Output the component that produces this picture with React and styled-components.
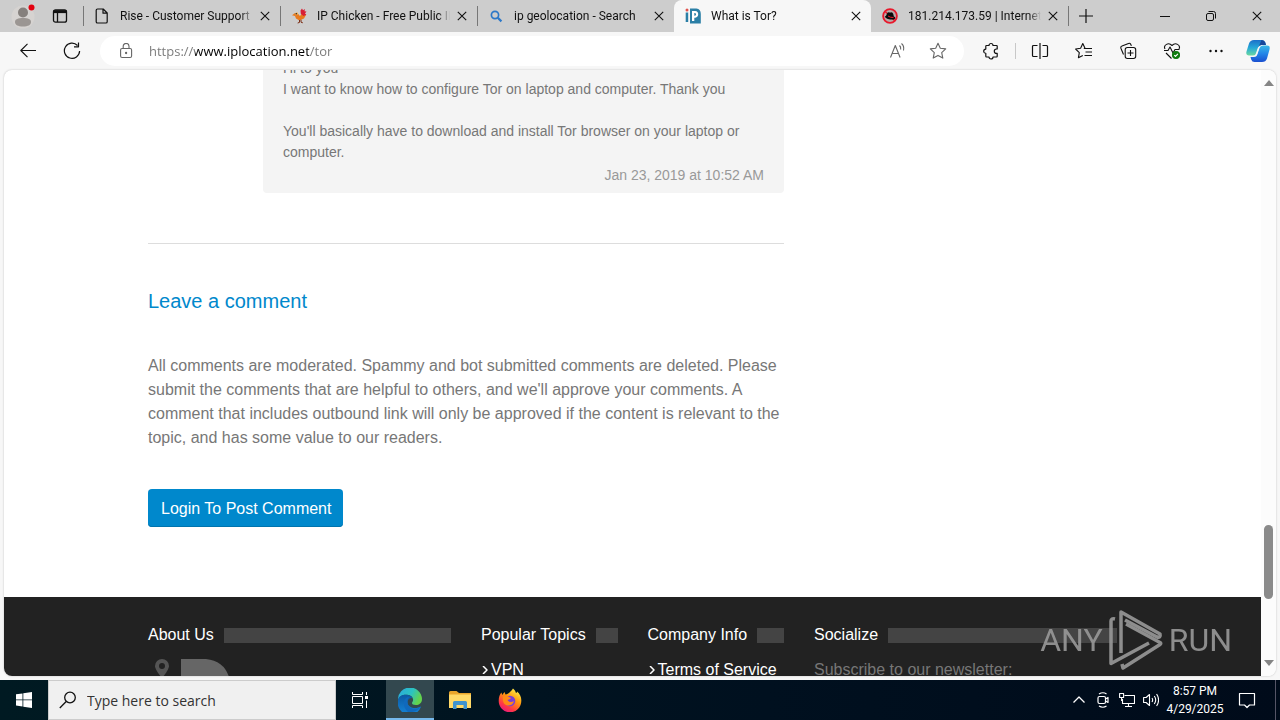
import React,{useState} from "react";
import styled,{createGlobalStyle} from 'styled-components'

const tabs = [
  { title: "Rise - Customer Support", icon: "page" },
  { title: "IP Chicken - Free Public IP", icon: "chicken" },
  { title: "ip geolocation - Search", icon: "search" },
  { title: "What is Tor?", icon: "ip" },
  { title: "181.214.173.59 | Internet Info", icon: "hat" },
]

const TabIcon = ({name}) => {
  if(name === "page"){
    return (
      <Svg $size={16} viewBox="0 0 16 16" strokeWidth="1.2">
        <path d="M3.5 1h5.7l4 4v8.7a1.3 1.3 0 0 1-1.3 1.3H3.5a1.3 1.3 0 0 1-1.3-1.3V2.3A1.3 1.3 0 0 1 3.5 1zM9 1v4.2h4.2" />
      </Svg>
    )
  }else if(name === "chicken"){
    return (
      <Svg $size={16} viewBox="0 0 16 16" stroke="none">
        <path d="M1 7.2 4 5l2.4.3L9 8l2.5-3.5L15 7l-2 3.6-4.5 1.8L5 10.5 4 8z" fill="#e87a1e" />
        <path d="M9.5 2.5 11 .5l1 1.7L14 1l-.5 2.3 2 .2-1.5 2 1.4 1.3-3 1.2-2.6-2.2z" fill="#d81f35" />
        <path d="M4 5.2 6.2 4l1 2.3-2.4 1.2z" fill="#f5b35b" />
        <circle cx="5.3" cy="5.8" r=".8" fill="#222" />
        <path d="M8.5 12v2.4L6.7 15M10 11.8v2.4l1.8.6" stroke="#7b2d14" fill="none" />
      </Svg>
    )
  }else if(name === "search"){
    return (
      <Svg $size={16} viewBox="0 0 16 16" stroke="#2c78c8" strokeWidth="1.7">
        <circle cx="7" cy="7" r="3.6" /><path d="m9.8 9.8 3.6 3.6" strokeWidth="2.2" />
      </Svg>
    )
  }else if(name === "ip"){
    return (
      <Svg $size={16} viewBox="0 0 16 16" stroke="none">
        <circle cx="2" cy="2" r="1.5" fill="#e0524d" />
        <path d="M.7 4.6h2.5V14H.7zM5 .5h6.5Q15.8 1 15.8 6v9.6H5z" fill="#2b7fa6" />
        <path d="M7 3h3.2q3 .4 3 3.3t-3 3.4H9.3V13H7z" fill="#fff" />
        <path d="M9.3 5h.7q1 .2 1 1.3T10 7.7h-.7z" fill="#2b7fa6" />
      </Svg>
    )
  }
  return (
    <Svg $size={16} viewBox="0 0 16 16" stroke="none">
      <circle cx="8" cy="8" r="6.9" fill="#b9a9a9" stroke="#e8192c" strokeWidth="1.8" />
      <path d="m3.2 3.5 9.8 9.5" stroke="#e8192c" strokeWidth="1.5" />
      <path d="M2.8 8.5C5 8 4.6 4.3 6.5 4.2c1.2 0 1.7.5 2.7.2 1.7-.5 2.4 2.4 2.6 4.1 1 .4 1.7 1 1.3 1.9-.6 1.3-3.8 1.4-6.2.8C4.5 10.6 3 9.6 2.8 8.5z" fill="#0a0a0a" />
      <path d="M6 8q2.500 1.800 5.500 1.500" stroke="#e8192c" />
    </Svg>
  )
}

const Close = ({size = 10}) => (
  <Svg $size={size} viewBox="0 0 10 10" strokeWidth="1.1"><path d="m.8.8 8.4 8.4M9.2.8.8 9.2" /></Svg>
)

const TabStrip = () => {
  const [active,setActive] = useState(3);
  return (
    <Strip>
      <Profile aria-label="Profile">
        <Svg $size={26} viewBox="0 0 26 26" stroke="none">
          <circle cx="12" cy="14" r="11.5" fill="#d6d3d1" />
          <circle cx="12" cy="9.5" r="5" fill="#85807d" />
          <path d="M4 19c0-3 3-4 8-4s8 1 8 4c0 3-3 4.5-8 4.5S4 22 4 19z" fill="#9b9693" />
          <circle cx="20.500" cy="4.500" r="3" fill="#e3000f" />
        </Svg>
      </Profile>
      <Workspaces aria-label="Tab actions menu">
        <Svg $size={16} viewBox="0 0 16 16" strokeWidth="1.3">
          <rect x="1.5" y="1.8" width="13" height="12.4" rx="2" />
          <path d="M1.5 3.6h13" strokeWidth="3" /><path d="M5.5 4v10" />
        </Svg>
      </Workspaces>
      <Tabs role="tablist">
        {tabs.map((tab,i) => (
          <Tab key={tab.title} $active={i === active} $bare={i === active || i === active + 1}>
            <TabLabel role="tab" aria-selected={i === active} onClick={() => setActive(i)}>
              <TabIcon name={tab.icon} />
              <TabTitle>{tab.title}</TabTitle>
            </TabLabel>
            <TabClose aria-label={`Close ${tab.title}`}><Close /></TabClose>
          </Tab>
        ))}
        <NewTab aria-label="New tab">
          <Svg $size={14} viewBox="0 0 14 14" strokeWidth="1.2"><path d="M7 0v14M0 7h14" /></Svg>
        </NewTab>
      </Tabs>
      <WindowButton aria-label="Minimize">
        <Svg $size={10} viewBox="0 0 10 10"><path d="M0 5.5h10" /></Svg>
      </WindowButton>
      <WindowButton aria-label="Restore">
        <Svg $size={10} viewBox="0 0 10 10">
          <rect x=".5" y="2.5" width="7" height="7" rx="1.5" />
          <path d="M2.5.5h5a2 2 0 0 1 2 2v5" />
        </Svg>
      </WindowButton>
      <WindowButton aria-label="Close window"><Close /></WindowButton>
    </Strip>
  )
}

const AddressBar = () => {
  const [url,setUrl] = useState("https://www.iplocation.net/tor");
  return (
    <Toolbar>
      <ToolButton aria-label="Back">
        <Svg $size={16} viewBox="0 0 16 16" strokeWidth="1.1"><path d="M16 7.5H.8M7.5.8.8 7.5l6.7 6.7" /></Svg>
      </ToolButton>
      <ToolButton aria-label="Refresh">
        <Svg $size={18} viewBox="0 0 18 18" strokeWidth="1.2"><path d="M14.5 3.5A7.6 7.6 0 1 0 16.6 9M15.5.5v4.3h-4.5" /></Svg>
      </ToolButton>
      <Address>
        <Svg $size={16} viewBox="0 0 16 16" stroke="#666" strokeWidth="1.1">
          <rect x="2.6" y="5.5" width="11" height="9" rx="1.5" />
          <path d="M5.2 5.5V3.3a2.9 2.9 0 0 1 5.8 0v2.2" /><circle cx="8.1" cy="10" r=".6" fill="#666" />
        </Svg>
        <Url aria-label="Address and search bar" value={url} onChange={(event) => setUrl(event.target.value)} />
        <AddressButton aria-label="Read aloud">
          <Svg $size={18} viewBox="0 0 18 18" stroke="#666" strokeWidth="1.1">
            <path d="M1.5 15.5 6.3 3.5l4.8 12M3.3 11.5h6M10.5 3.5q1.5 1.3 1.2 4M12.5 1.500q3 2.500 2 7" />
          </Svg>
        </AddressButton>
        <AddressButton aria-label="Add to favorites">
          <Svg $size={18} viewBox="0 0 18 18" stroke="#666" strokeWidth="1.1">
            <path d="m9 1.3 2.3 5 5.4.6-4 3.7 1.1 5.5L9 13.4l-4.8 2.7 1.1-5.500-4-3.700 5.400-.6z" />
          </Svg>
        </AddressButton>
      </Address>
      <ToolButton aria-label="Extensions">
        <Svg $size={18} viewBox="0 0 18 18" strokeWidth="1.2">
          <path d="M4.500 3.500H7a2 2 0 0 1 4 0h3.500q.7 0 .7.700v2.800h-.7a2.200 2.200 0 0 0 0 4.400h.7v2.900q0 .7-.7.700H11a2 2 0 0 1-4 0H4.500q-.7 0-.7-.7v-3a2.100 2.100 0 0 1 0-4.200V4.200q0-.7.700-.7z" />
        </Svg>
      </ToolButton>
      <Divider />
      <ToolButton aria-label="Split screen">
        <Svg $size={18} viewBox="0 0 18 18" strokeWidth="1.2">
          <path d="M9 1v16M6.5 3.5h-4a1 1 0 0 0-1 1v9a1 1 0 0 0 1 1h4M11.5 3.5h4a1 1 0 0 1 1 1v9a1 1 0 0 1-1 1h-4" />
        </Svg>
      </ToolButton>
      <ToolButton aria-label="Favorites">
        <Svg $size={18} viewBox="0 0 18 18" strokeWidth="1.1">
          <path d="M10 6.2 7.8 1.5 5.6 6.3l-5 .7 3.7 3.6-.9 5.2 4.4-2.4M8.8 6.5H17M10.5 10H17M9.5 13.5H17" />
        </Svg>
      </ToolButton>
      <ToolButton aria-label="Collections">
        <Svg $size={18} viewBox="0 0 18 18" strokeWidth="1.1">
          <path d="M4.500 12.500 2 6.500Q1.300 4.500 3 4l6.500-2.600q1.600-.5 2.200.8l.7 1.700" />
          <rect x="6.2" y="5.500" width="10.5" height="11" rx="2.2" /><path d="M11.5 8v6M8.5 11h6" />
        </Svg>
      </ToolButton>
      <ToolButton aria-label="Browser essentials">
        <Svg $size={18} viewBox="0 0 18 18" strokeWidth="1.1">
          <path d="M2 7C0 3 5.500-.2 9 3.500 12.500-.2 18 3 16 7M1 8.500h4l2-3.500 3 6 2-3.500h4.500M3 11l5.500 5.500" />
          <circle cx="13" cy="13" r="3.500" fill="#107c10" stroke="#107c10" />
          <path d="m11.200 13.200 1.300 1.200 2.400-2.600" stroke="#fff" />
        </Svg>
      </ToolButton>
      <ToolButton aria-label="Settings and more">
        <Svg $size={14} viewBox="0 0 14 14" stroke="none">
          <circle cx="1.5" cy="7" r="1.2" fill="#111" /><circle cx="7" cy="7" r="1.2" fill="#111" /><circle cx="12.5" cy="7" r="1.2" fill="#111" />
        </Svg>
      </ToolButton>
      <CopilotButton aria-label="Copilot">
        <Svg $size={24} viewBox="0 0 24 24" stroke="none">
          <defs>
            <linearGradient id="cop1" x1="0" y1="0" x2="0" y2="1"><stop offset="0" stopColor="#1b6fc9" /><stop offset=".5" stopColor="#25a8d8" /><stop offset="1" stopColor="#6bd9a0" /></linearGradient>
            <linearGradient id="cop2" x1="0" y1="0" x2="0" y2="1"><stop offset="0" stopColor="#39b9e8" /><stop offset=".5" stopColor="#2385e8" /><stop offset="1" stopColor="#1a4fd0" /></linearGradient>
          </defs>
          <path d="M8 1h8q2.500 0 3.300 2.500L20 6h-4.500q-2.500 0-3.300 2.500L10.500 14q-.8 2.500-3.500 2.500H3q-3.500 0-2.500-4L3 4.500Q4.200 1 8 1z" fill="url(#cop1)" />
          <path d="M16 23H8.500q-2.500 0-3.300-2.500L4.500 18H8q2.500 0 3.300-2.500L13.500 9q.8-2.500 3.500-2.500h4q3.500 0 2.500 4L21 19.500Q19.800 23 16 23z" fill="url(#cop2)" />
          <path d="M15.500 1q3 0 3.800 2.500L20 6h-4.500q-2 0-2.700 1.500z" fill="#17479b" />
          <path d="m13.500 8-2.800 8.500h-1.500L12 8.500z" fill="#f7f7f7" />
        </Svg>
      </CopilotButton>
    </Toolbar>
  )
}

const FooterTitle = ({children}) => <TitleRow><h2>{children}</h2><Bar /></TitleRow>

const FooterLink = ({children}) => (
  <Link href="#">
    <Svg $size={8} viewBox="0 0 8 8" stroke="#fff" strokeWidth="1.5"><path d="m2 0 4 4-4 4" /></Svg>
    {children}
  </Link>
)

const WebPage = () => (
  <Page>
    <Scroller>
      <Article>
        <Thread>
          <Comment>
            <p>Hi to you<br />I want to know how to configure Tor on laptop and computer. Thank you</p>
            <p>You'll basically have to download and install Tor browser on your laptop or computer.</p>
            <CommentDate>Jan 23, 2019 at 10:52 AM</CommentDate>
          </Comment>
          <Rule />
          <Heading>Leave a comment</Heading>
          <Notice>
            All comments are moderated. Spammy and bot submitted comments are deleted. Please submit the comments that are helpful to others, and we'll approve your comments. A comment that includes outbound link will only be approved if the content is relevant to the topic, and has some value to our readers.
          </Notice>
          <LoginButton>Login To Post Comment</LoginButton>
        </Thread>
      </Article>
      <Footer>
        <Columns>
          <Column $span={4}>
            <FooterTitle>About Us</FooterTitle>
            <Svg $size={90} viewBox="0 0 90 90" stroke="none">
              <path d="M14 1a7 7 0 0 1 7 7c0 4-7 12-7 12S7 12 7 8a7 7 0 0 1 7-7z" fill="#555" />
              <circle cx="14" cy="8" r="3" fill="#222" />
              <path d="M33 1h25q18 2 23 18v60H33z" fill="#666" />
            </Svg>
          </Column>
          <Column $span={2}>
            <FooterTitle>Popular Topics</FooterTitle>
            <FooterLink>VPN</FooterLink>
          </Column>
          <Column $span={2}>
            <FooterTitle>Company Info</FooterTitle>
            <FooterLink>Terms of Service</FooterLink>
          </Column>
          <Column $span={4}>
            <FooterTitle>Socialize</FooterTitle>
            <Newsletter>Subscribe to our newsletter:</Newsletter>
          </Column>
        </Columns>
      </Footer>
    </Scroller>
    <Scrollbar>
      <Svg $size={10} viewBox="0 0 10 10" stroke="none"><path d="M5 2 10 8H0z" fill="#858585" /></Svg>
      <Track><Thumb /></Track>
      <Svg $size={10} viewBox="0 0 10 10" stroke="none"><path d="M5 8 0 2h10z" fill="#858585" /></Svg>
    </Scrollbar>
    <Watermark>
      <span>ANY</span>
      <Svg $size={64} $width={56} viewBox="2 0 56 64" stroke="#999" strokeWidth="3.5">
        <path d="M9 11q-4-1-4 2v42.500L43 35" />
        <path d="M15 45V4l39 22q1 4-3 3L19 12" />
        <path d="M20 16l34 18.500q1.500 1 0 2L17 60l-1-4" />
      </Svg>
      <span>RUN</span>
    </Watermark>
  </Page>
)

const Taskbar = () => {
  const [query,setQuery] = useState("");
  return (
    <Task>
      <TaskButton aria-label="Start">
        <Svg $size={16} viewBox="0 0 16 16" stroke="none">
          <path d="M0 2.3 6.5 1.4v6.1H0zM7.3 1.3 16 0v7.5H7.3zM0 8.3h6.5v6.2L0 13.6zM7.3 8.3H16V16l-8.7-1.3z" fill="#fff" />
        </Svg>
      </TaskButton>
      <SearchBox>
        <Svg $size={18} viewBox="0 0 18 18" strokeWidth="1.3"><circle cx="11" cy="6.5" r="5.3" /><path d="M7.2 10.5.8 17" /></Svg>
        <SearchInput aria-label="Search" placeholder="Type here to search" value={query} onChange={(event) => setQuery(event.target.value)} />
      </SearchBox>
      <Apps>
        <TaskButton aria-label="Task view">
          <Svg $size={18} viewBox="0 0 18 18" stroke="#fff">
            <rect x="1.5" y="5.5" width="10" height="7" /><path d="M1.5 1v2.5h10V1M1.5 17v-2.5h10V17M15.5 1v3M15.5 9.5V17" /><path d="M15.5 5v3" strokeWidth="3" />
          </Svg>
        </TaskButton>
        <TaskButton aria-label="Microsoft Edge" $active>
          <Svg $size={24} viewBox="0 0 24 24" stroke="none">
            <defs>
              <linearGradient id="edge1" x1="0" y1="0" x2="1" y2=".4"><stop offset="0" stopColor="#2aa9e0" /><stop offset=".6" stopColor="#2cc3c0" /><stop offset="1" stopColor="#63d34c" /></linearGradient>
              <linearGradient id="edge2" x1="0" y1="0" x2="0" y2="1"><stop offset="0" stopColor="#0c59a4" /><stop offset="1" stopColor="#1585d8" /></linearGradient>
            </defs>
            <path d="M0 12A12 12 0 0 1 24 11c0 4-3 6-6 6s-4-1-4-2 1.5-1.3 1-4c-.6-3-3.6-4.3-7-4.3-4 0-7 2-8 5.3z" fill="url(#edge1)" />
            <path d="M0 12C1 8 4 6.7 8 6.7c3 0 5.5 1.3 6.5 3.3-3-.5-5 1.5-5 4 0 4 4 6 7.5 6 2.3 0 4-.7 5-1.3.7-.3 1 .3.7.8A12 12 0 0 1 0 12z" fill="url(#edge2)" />
            <path d="M10 24A12 12 0 0 1 6 14c.3-3 2.500-5 5-5-2.500 2.500-2 8 1 10.500 3 2 7 1.500 10-.3-2.600 3.500-6.500 5.500-12 4.800z" fill="#1069bd" />
          </Svg>
        </TaskButton>
        <TaskButton aria-label="File Explorer">
          <Svg $size={24} viewBox="0 0 24 24" stroke="none">
            <path d="M1 4.500q0-1.500 1.500-1.500h6L11 5h12v15H1z" fill="#e9a52b" />
            <path d="M1 6.500h22V20H1z" fill="#ffd968" />
            <path d="M5 21v-6.500q0-1.500 1.500-1.500h11q1.500 0 1.500 1.500V21h-3.500v-4h-7v4z" fill="#3e93d0" />
          </Svg>
        </TaskButton>
        <TaskButton aria-label="Firefox">
          <Svg $size={24} viewBox="0 0 24 24" stroke="none">
            <defs>
              <linearGradient id="fox" x1=".8" y1="0" x2=".2" y2="1"><stop offset="0" stopColor="#fff44f" /><stop offset=".4" stopColor="#ff980e" /><stop offset=".75" stopColor="#ff3647" /><stop offset="1" stopColor="#e31587" /></linearGradient>
            </defs>
            <path d="M15 .5c2 1.500 2.500 3 3 4.500 1-.2 1-1 1-1.500C22 6 23.500 9 23.300 13A11.300 11.300 0 0 1 .7 13C.7 9 1.700 6.500 3.500 4.500L4.200 7 6.500 4l1 2.500C10 6.500 12.500 4 15 .5z" fill="url(#fox)" />
            <circle cx="12" cy="13" r="5.300" fill="#7a3fd6" />
            <path d="M5 8.500c2-1.500 4-1 6 .5l2 1c-1 1.500-2.500 1.500-3.500 2 1.500 2.500 4 2.500 6.500 1-1 4-5 5.500-8 4S4.500 12 5 8.500z" fill="#ff8a16" />
          </Svg>
        </TaskButton>
      </Apps>
      <Tray>
        <TrayButton aria-label="Show hidden icons"><Svg $size={16} viewBox="0 0 16 16" stroke="#fff" strokeWidth="1.3"><path d="m2.5 10.5 5.5-5.5 5.5 5.5" /></Svg></TrayButton>
        <TrayButton aria-label="Meet now">
          <Svg $size={16} viewBox="0 0 16 16" stroke="#fff" strokeWidth="1.2"><rect x="3" y="4.5" width="7.5" height="7" rx="1.5" /><path d="m10.5 7 2.5-1.5v5L10.5 9M4 2q4-2.5 7.5 0M4 14q4 2.5 7.5 0" /></Svg>
        </TrayButton>
        <TrayButton aria-label="Network">
          <Svg $size={16} viewBox="0 0 16 16" stroke="#fff" strokeWidth="1.1"><path d="M5.5 3.5h10v8H3.5V7M9.5 11.5v3M6 14.5h7" /><path d="M.6 1.5h4v4h-4zM2.6 5.5V9" /></Svg>
        </TrayButton>
        <TrayButton aria-label="Volume">
          <Svg $size={16} viewBox="0 0 16 16" stroke="#fff" strokeWidth="1.1"><path d="M.6 5.500h2.500l3.400-3v11l-3.400-3H.6zM9 6q1.300 2 0 4M11.300 4q2.800 4 0 8M13.600 2q4 6 0 12" /></Svg>
        </TrayButton>
        <Clock><time>8:57 PM</time><time>4/29/2025</time></Clock>
        <Notifications aria-label="Notifications">
          <Svg $size={18} viewBox="0 0 18 18" stroke="#fff" strokeWidth="1.2"><path d="M1.5 2.5h15v11.5h-5L9 16.5 6.500 14h-5z" /></Svg>
        </Notifications>
      </Tray>
    </Task>
  )
}

const App = () => (
  <>
    <GlobalStyle />
    <Screen>
      <TabStrip />
      <AddressBar />
      <WebPage />
      <Taskbar />
    </Screen>
  </>
)

export default App;

const GlobalStyle = createGlobalStyle`
* { box-sizing: border-box; }
body { margin: 0; }
button, input { font: inherit; color: inherit; border: 0; padding: 0; background: none; outline: 0; }
h2, p { margin: 0; font-size: inherit; font-weight: 400; }
`

const Screen = styled.div`
display: flex;
flex-direction: column;
height: 100vh;
overflow: hidden;
background: #f7f7f7;
color: #111;
font-family: "Open Sans", "Noto Sans", sans-serif;
font-size: 12px;
`

const Svg = styled.svg`
flex: none;
display: block;
width: ${props => props.$width || props.$size}px;
height: ${props => props.$size}px;
fill: none;
stroke: ${props => props.stroke || "#111"};
stroke-linejoin: round;
`

const Strip = styled.div`
display: flex;
flex: none;
height: 32px;
background: #cdcdcd;
`

const IconButton = styled.button`
flex: none;
display: flex;
align-items: center;
justify-content: center;
`

const Profile = styled(IconButton)`
width: 36px;
margin-left: 6px;
`

const Workspaces = styled(IconButton)`
width: 36px;
margin-right: 5px;
`

const Tabs = styled.div`
display: flex;
flex: 1;
min-width: 0;
`

const Tab = styled.div`
position: relative;
display: flex;
align-items: center;
flex: 0 1 197px;
min-width: 0;
padding: 0 7px 0 11px;
border-radius: 8px 8px 0 0;
background: ${props => props.$active ? "#f7f7f7" : "transparent"};
&::before {
  content: "";
  position: absolute;
  left: 0;
  top: 6px;
  width: 1px;
  height: 20px;
  background: ${props => props.$bare ? "transparent" : "#777"};
}
`

const TabLabel = styled.button`
display: flex;
align-items: center;
gap: 10px;
flex: 1;
min-width: 0;
height: 100%;
text-align: left;
font-family: Roboto, "Open Sans", sans-serif;
`

const TabTitle = styled.span`
flex: 1;
overflow: hidden;
white-space: nowrap;
mask-image: linear-gradient(to left, transparent 4px, #000 16px);
`

const TabClose = styled(IconButton)`
width: 16px;
height: 16px;
`

const NewTab = styled(IconButton)`
position: relative;
width: 36px;
&::before {
  content: "";
  position: absolute;
  left: 0;
  top: 6px;
  width: 1px;
  height: 20px;
  background: #777;
}
`

const WindowButton = styled(IconButton)`
width: 46px;
`

const Toolbar = styled.div`
display: flex;
align-items: center;
gap: 4px;
flex: none;
height: 38px;
padding: 0 4px 0 8px;
`

const ToolButton = styled(IconButton)`
width: 40px;
height: 32px;
`

const CopilotButton = styled(ToolButton)`
width: 36px;
`

const Address = styled.div`
display: flex;
align-items: center;
flex: 1;
min-width: 0;
height: 30px;
margin: 0 3px 0 4px;
padding: 0 6px 0 18px;
border-radius: 15px;
background: #fff;
`

const Url = styled.input`
flex: 1;
min-width: 0;
height: 24px;
margin-left: 15px;
font-size: 13px;
background: linear-gradient(to right, #777 46px, #000 46px, #000 160px, #777 160px);
background-clip: text;
-webkit-text-fill-color: transparent;
`

const AddressButton = styled(IconButton)`
width: 40px;
height: 28px;
`

const Divider = styled.span`
flex: none;
width: 1px;
height: 16px;
background: #c8c8c8;
`

const Page = styled.main`
position: relative;
display: flex;
flex: 1;
min-height: 0;
margin: 0 4px 4px;
border-radius: 8px;
overflow: hidden;
background: #fff;
box-shadow: 0 0 2px #bbb;
font-family: "Liberation Sans", Arial, sans-serif;
font-size: 16px;
line-height: 24px;
`

const Scroller = styled.div`
flex: 1;
min-width: 0;
overflow: hidden;
`

const Columns = styled.div`
display: grid;
grid-template-columns: repeat(12, 1fr);
column-gap: 30px;
max-width: 969px;
margin: 0 auto;
`

const Article = styled(Columns)`
`

const Thread = styled.section`
grid-column: span 8;
padding-bottom: 70px;
`

const Comment = styled.article`
display: flex;
flex-direction: column;
gap: 21px;
margin: -12px 0 50px 115px;
padding: 0 20px 7px;
border-radius: 4px;
background: #f4f4f4;
color: #777;
font-size: 14px;
line-height: 21px;
`

const CommentDate = styled.time`
margin-top: -19px;
text-align: right;
color: #999;
`

const Rule = styled.hr`
height: 1px;
margin: 0 0 43px;
border: 0;
background: #ddd;
`

const Heading = styled.h2`
margin-bottom: 39px;
color: #0088cc;
font-size: 20px;
line-height: 28px;
`

const Notice = styled.p`
margin-bottom: 39px;
color: #777;
`

const LoginButton = styled.button`
height: 38px;
padding: 1px 12px 0 13px;
border-radius: 4px;
box-shadow: inset 0 -1px #0074ad;
background: #0088cc;
color: #fff;
`

const Footer = styled.footer`
padding-top: 26px;
background: #222;
color: #fff;
`

const Column = styled.div`
grid-column: span ${props => props.$span};
min-width: 0;
`

const TitleRow = styled.div`
display: flex;
align-items: center;
gap: 10px;
margin-bottom: 11px;
white-space: nowrap;
`

const Bar = styled.span`
flex: 1;
height: 15px;
background: #444;
`

const Link = styled.a`
display: flex;
align-items: center;
gap: 2px;
color: #fff;
text-decoration: none;
white-space: nowrap;
`

const Newsletter = styled.p`
color: #777;
`

const Scrollbar = styled.div`
display: flex;
flex-direction: column;
align-items: center;
flex: none;
width: 15px;
padding: 8px 0;
background: #fcfcfc;
`

const Track = styled.div`
display: flex;
flex-direction: column;
justify-content: flex-end;
flex: 1;
padding-bottom: 59px;
`

const Thumb = styled.div`
width: 9px;
height: 74px;
border-radius: 5px;
background: #8a8a8a;
`

const Watermark = styled.div`
position: absolute;
right: 44px;
bottom: 4px;
display: flex;
align-items: center;
gap: 5px;
color: #999;
opacity: 0.9;
font-family: Roboto, sans-serif;
font-size: 32px;
line-height: 64px;
`

const Task = styled.footer`
display: flex;
flex: none;
height: 40px;
background: linear-gradient(to right, #001a22, #00101f 60%, #000b1a);
color: #fff;
`

const TaskButton = styled(IconButton)`
width: 48px;
height: 40px;
background: ${props => props.$active ? "#33484f" : "transparent"};
box-shadow: ${props => props.$active ? "inset 0 -2px #76b9ed" : "none"};
`

const SearchBox = styled.div`
display: flex;
align-items: center;
gap: 10px;
flex: 0 1 288px;
padding: 0 10px;
border: 1px solid #ccc;
background: #f0f0f0;
color: #333;
font-size: 14px;
`

const SearchInput = styled.input`
flex: 1;
min-width: 0;
&::placeholder {
  color: #333;
  opacity: 1;
}
`

const Apps = styled.div`
display: flex;
gap: 2px;
`

const Tray = styled.div`
display: flex;
align-items: center;
margin-left: auto;
padding-right: 8px;
border-right: 1px solid #556;
margin-right: 4px;
`

const TrayButton = styled(IconButton)`
width: 24px;
height: 40px;
`

const Clock = styled.div`
display: flex;
flex-direction: column;
align-items: center;
width: 64px;
line-height: 18px;
font-family: Roboto, "Open Sans", sans-serif;
`

const Notifications = styled(IconButton)`
width: 40px;
height: 40px;
`
